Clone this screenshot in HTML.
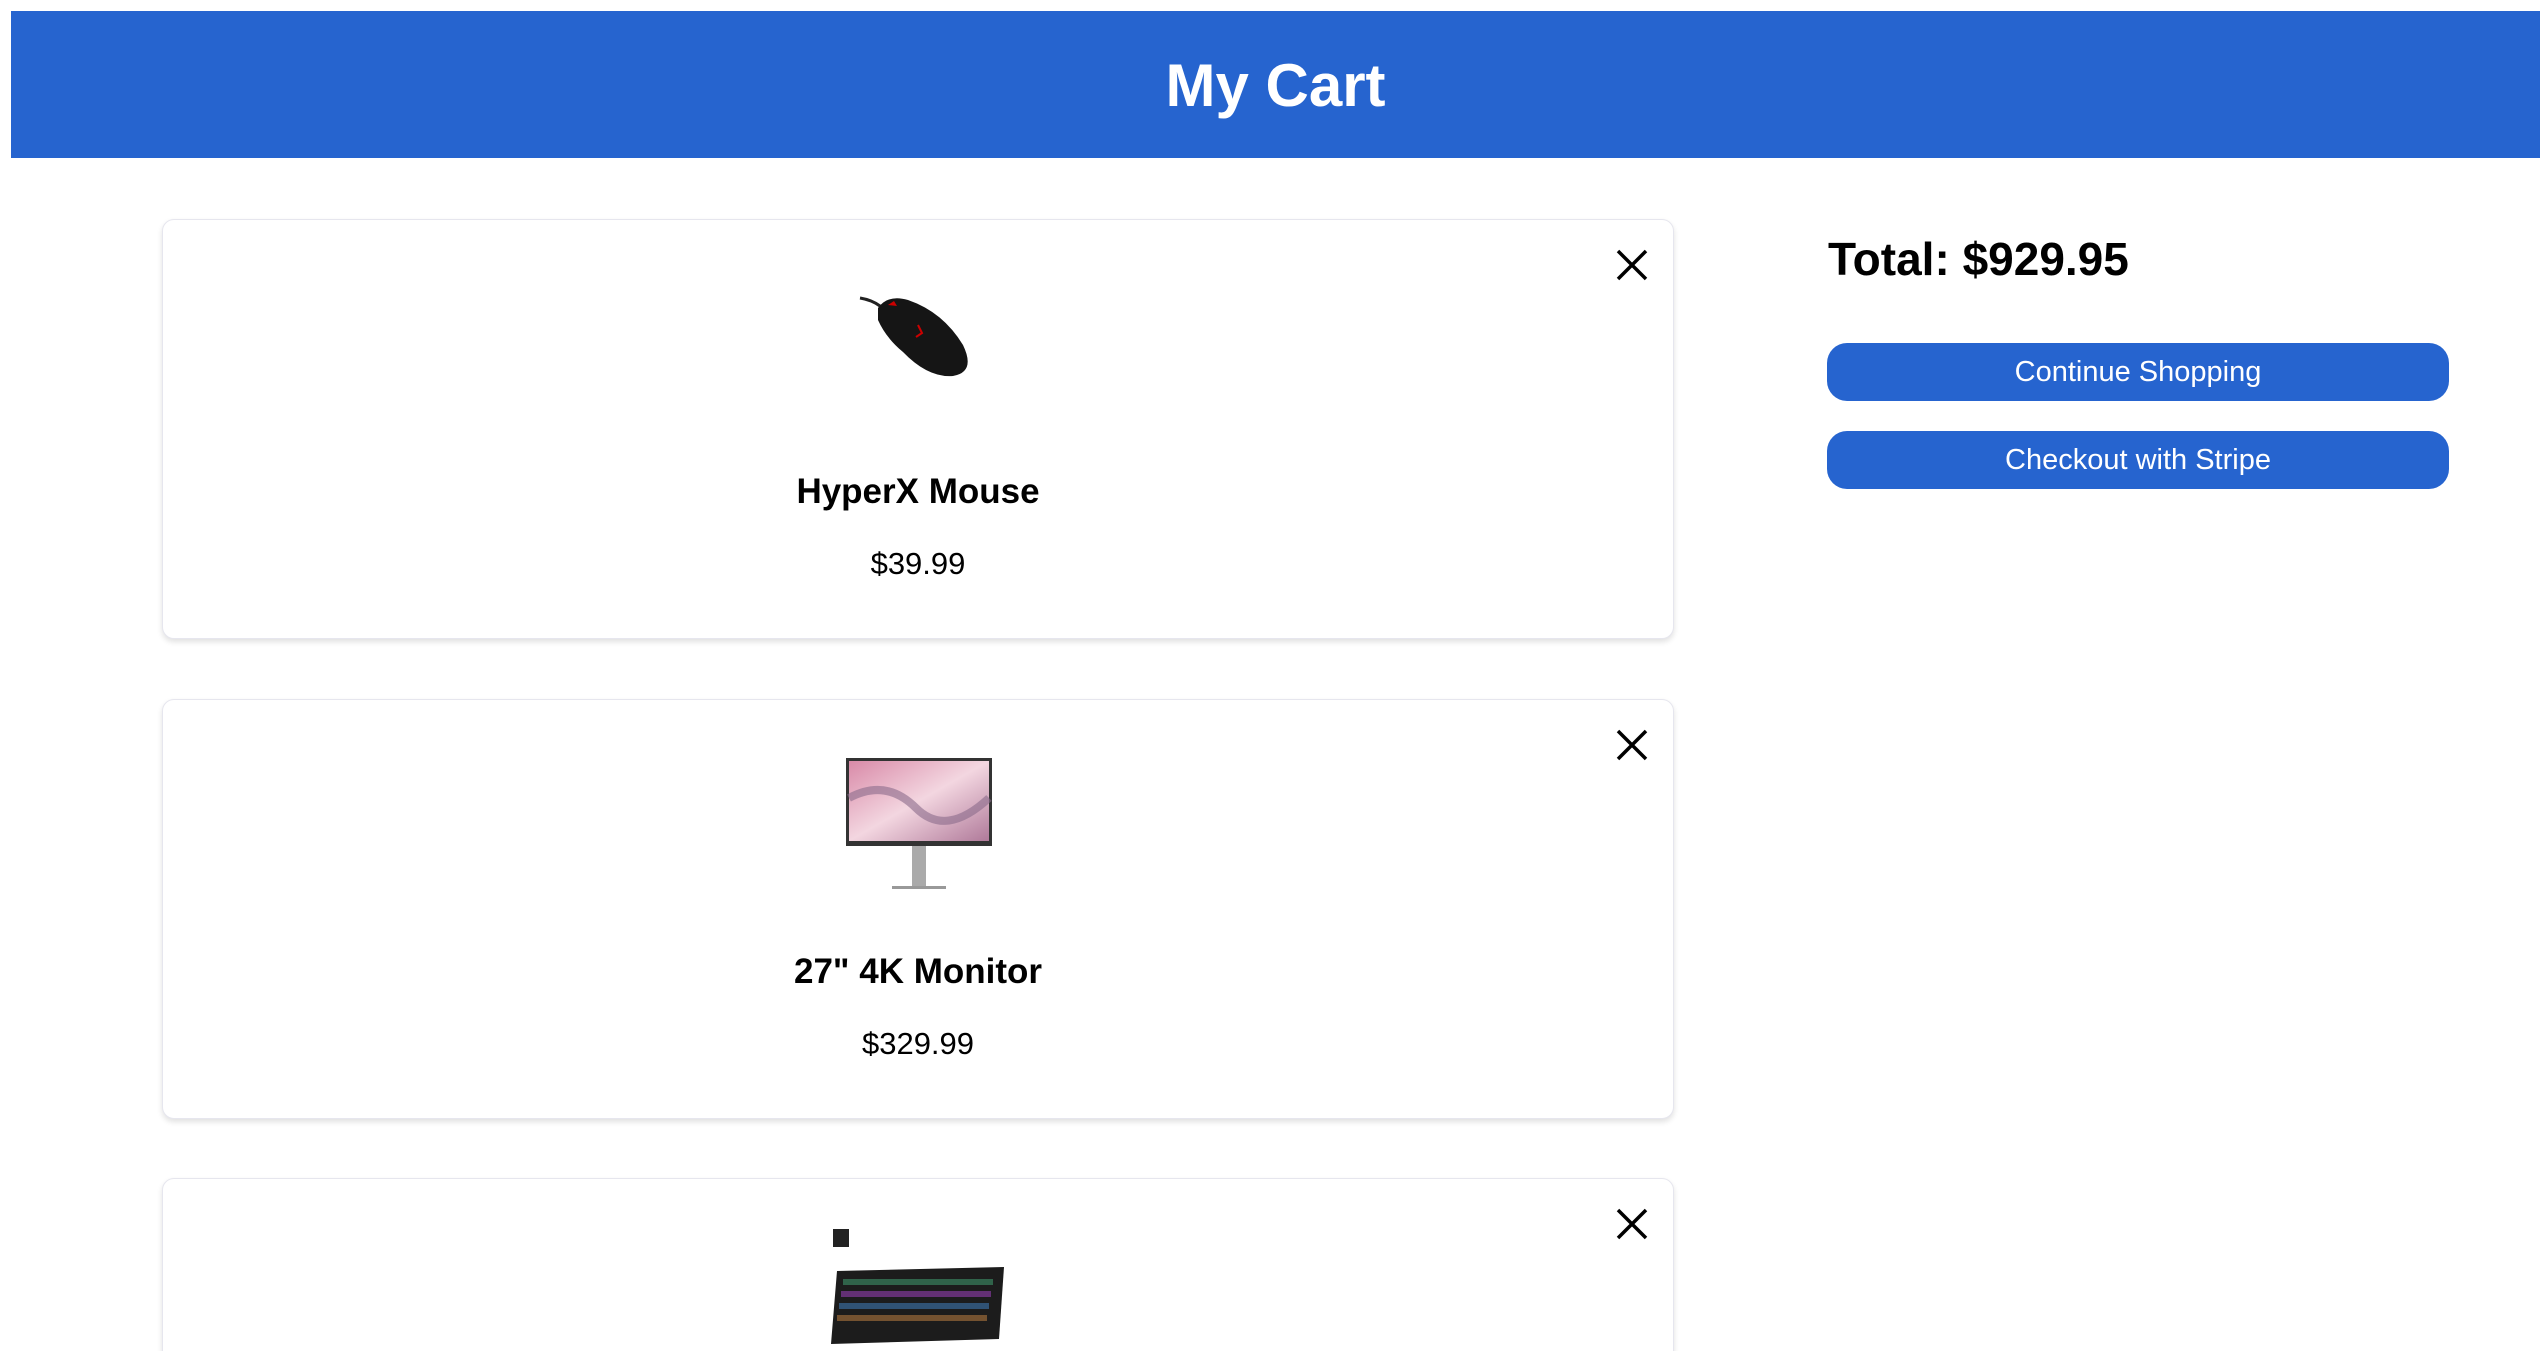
<!DOCTYPE html>
<html style="overflow:hidden;height:1351px"><head><meta charset="utf-8"><style>
*{box-sizing:border-box}
html,body{margin:0;padding:0}
body{width:2548px;height:1351px;overflow:hidden;background:#fff;font-family:"Liberation Sans",Arial,sans-serif}
.wrap{position:relative;width:2548px;height:1351px;overflow:hidden}
.hdr{position:absolute;left:11px;top:11px;width:2529px;height:147px;background:#2664cf;color:#fff;font-weight:bold;font-size:60px;text-align:center;line-height:150px}
.card{position:absolute;left:162px;width:1512px;height:420px;border:1px solid #e6e6ee;border-radius:12px;box-shadow:0 3px 6px rgba(0,0,0,.12);background:#fff}
.x{position:absolute;left:1452px;top:28px;width:34px;height:34px}
.name{position:absolute;left:0;right:0;top:252px;text-align:center;font-weight:bold;font-size:35px}
.price{position:absolute;left:0;right:0;top:326px;text-align:center;font-size:31px}
.img{position:absolute}
.total{position:absolute;left:1828px;top:232px;font-weight:bold;font-size:46px}
.btn{position:absolute;left:1827px;width:622px;height:58px;background:#2664cf;border-radius:20px;color:#fff;font-size:29px;text-align:center;line-height:58px}
</style></head><body><div class="wrap">
<div class="hdr">My Cart</div>

<div class="card" style="top:219px">
<svg class="x" viewBox="0 0 34 34"><path d="M3 3L31 31M31 3L3 31" stroke="#000" stroke-width="3.5"/></svg>
<svg class="img" style="left:695px;top:70px" width="130" height="100" viewBox="0 0 130 100">
<path d="M2 8Q14 10 22 16" stroke="#222" stroke-width="3" fill="none"/>
<path d="M20 18Q30 4 50 10Q85 22 105 55Q118 82 95 86Q70 88 45 62Q28 48 20 30Z" fill="#151515"/>
<path d="M30 15l6-4 3 5z" fill="#c00"/><path d="M60 35l4 8-6 4" stroke="#c00" stroke-width="2" fill="none"/>
</svg>
<div class="name">HyperX Mouse</div>
<div class="price">$39.99</div>
</div>

<div class="card" style="top:699px">
<svg class="x" viewBox="0 0 34 34"><path d="M3 3L31 31M31 3L3 31" stroke="#000" stroke-width="3.5"/></svg>
<svg class="img" style="left:683px;top:58px" width="146" height="134" viewBox="0 0 146 134">
<defs><linearGradient id="g" x1="0" y1="0" x2="1" y2="1"><stop offset="0" stop-color="#d98aa8"/><stop offset=".5" stop-color="#f3d6e0"/><stop offset="1" stop-color="#b07a9a"/></linearGradient></defs>
<rect x="0" y="0" width="146" height="88" fill="#333"/>
<rect x="3" y="3" width="140" height="80" fill="url(#g)"/>
<path d="M3 40Q40 20 70 50T143 40" stroke="#8b6a8a" stroke-width="8" fill="none" opacity=".6"/>
<rect x="66" y="88" width="14" height="40" fill="#aaa"/>
<rect x="46" y="128" width="54" height="3" fill="#999"/>
</svg>
<div class="name">27" 4K Monitor</div>
<div class="price">$329.99</div>
</div>

<div class="card" style="top:1178px;height:200px">
<svg class="x" viewBox="0 0 34 34"><path d="M3 3L31 31M31 3L3 31" stroke="#000" stroke-width="3.5"/></svg>
<svg class="img" style="left:666px;top:50px" width="180" height="130" viewBox="0 0 180 130">
<rect x="4" y="0" width="16" height="18" fill="#222"/>
<path d="M8 42L175 38L170 110L2 115Z" fill="#1c1c1c"/>
<g fill="#4a7"><rect x="14" y="50" width="150" height="6" opacity=".5"/></g>
<g fill="#a4c"><rect x="12" y="62" width="150" height="6" opacity=".5"/></g>
<g fill="#48c"><rect x="10" y="74" width="150" height="6" opacity=".5"/></g>
<g fill="#c84"><rect x="8" y="86" width="150" height="6" opacity=".5"/></g>
</svg>
</div>

<div class="total">Total: $929.95</div>
<div class="btn" style="top:343px">Continue Shopping</div>
<div class="btn" style="top:431px">Checkout with Stripe</div>
</div></body></html>
